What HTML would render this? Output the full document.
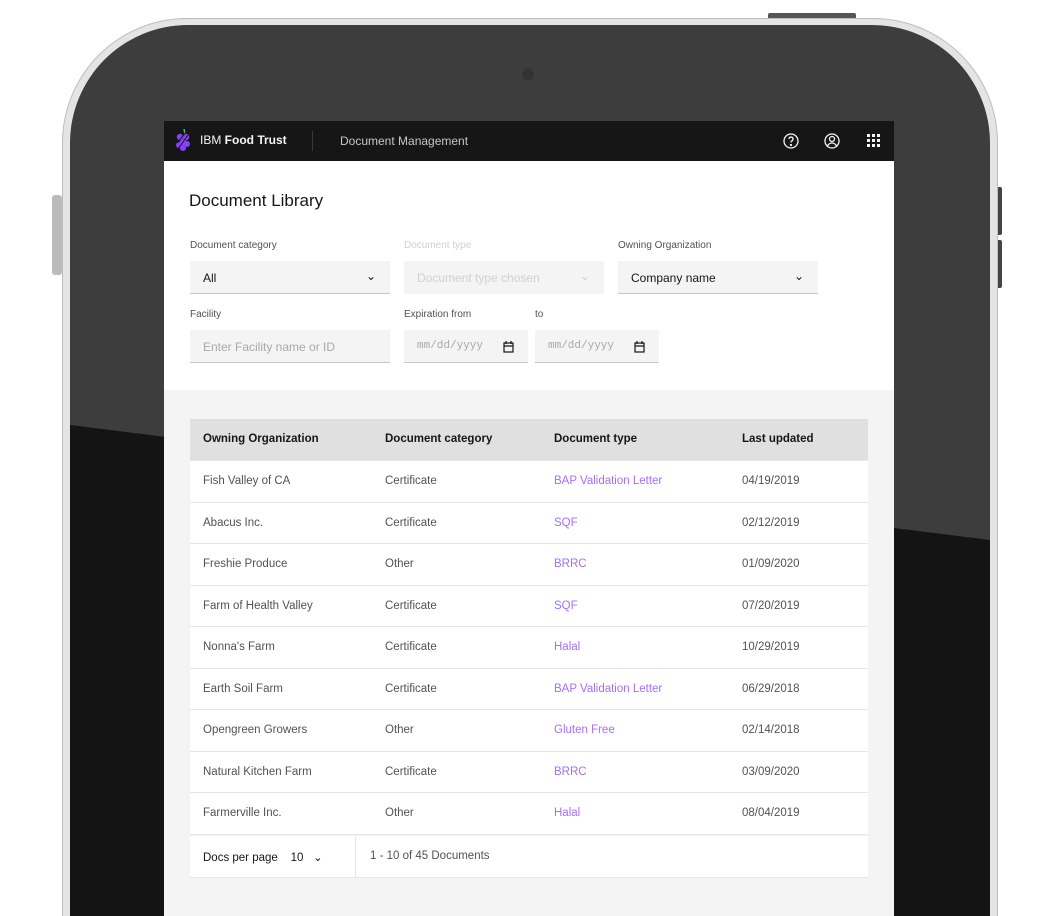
<!DOCTYPE html>
<html><head><meta charset="utf-8"><style>
*{margin:0;padding:0;box-sizing:border-box}
html{width:1052px;height:916px;overflow:hidden}
body{width:1052px;height:916px;overflow:hidden;background:#fff;font-family:"Liberation Sans",sans-serif;position:relative}
.abs{position:absolute}
.outer{left:62px;top:18px;width:936px;height:898px;border-radius:125px 125px 0 0;background:#e4e4e4;border:1px solid #bdbdbd;border-bottom:none}
.bez{left:70px;top:25px;width:920px;height:891px;border-radius:118px 118px 0 0;background:#3d3d3d;overflow:hidden}
.screen{left:164px;top:121px;width:730px;height:795px;background:#f4f4f4;overflow:hidden}
.hdr{left:0;top:0;width:730px;height:40px;background:#161616;color:#e0e0e0;font-size:12px}
.white{left:0;top:40px;width:730px;height:229px;background:#fff}
.lbl{font-size:10px;color:#525252}
.fld{background:#f4f4f4;border-bottom:1px solid #c6c6c6;height:33px;font-size:12px;color:#161616;padding:10px 13px}
.tbl{left:26px;top:298px;width:678px}
.row{height:41.5px;background:#fff;border-bottom:1px solid #e6e6e6;position:relative;font-size:11.5px;color:#525252}
.row span{position:absolute;top:14px}
.th{background:#e0e0e0;font-weight:bold;color:#161616;height:42px}
.c1{left:13px}.c2{left:195px}.c3{left:364px}.c4{left:552px}
.lk{color:#a56eff}
.cal{position:absolute;right:14px;top:11px}
</style></head><body>
<div class="abs" style="left:768px;top:13px;width:88px;height:6px;background:#555;border-radius:2px"></div>
<div class="abs" style="left:52px;top:195px;width:10px;height:80px;background:#bbb;border-radius:3px"></div>
<div class="abs" style="left:996px;top:187px;width:6px;height:48px;background:#444;border-radius:2px"></div>
<div class="abs" style="left:996px;top:240px;width:6px;height:48px;background:#444;border-radius:2px"></div>
<div class="abs outer"></div>
<div class="abs bez">
<svg class="abs" style="left:0;top:0" width="920" height="891"><polygon points="0,400 920,515 920,891 0,891" fill="#141414"/></svg>
<div class="abs" style="left:452px;top:43px;width:12px;height:12px;border-radius:50%;background:#333"></div>
</div>
<div class="abs screen">
<div class="abs hdr">
<svg class="abs" style="left:11px;top:8px" width="18" height="24" viewBox="0 0 18 24"><g fill="#8a3ffc"><circle cx="5" cy="8" r="3.2"/><circle cx="11" cy="8" r="3.2"/><circle cx="8" cy="13" r="3.2"/><circle cx="4" cy="16" r="3"/><circle cx="12" cy="15" r="3"/><circle cx="8" cy="19" r="3"/></g><path d="M9 0l1 5" stroke="#42be65" stroke-width="1.5"/><path d="M3 20L13 6M2 14L12 2" stroke="#161616" stroke-width="1"/></svg>
<div class="abs" style="left:36px;top:12px;color:#f4f4f4">IBM <b>Food Trust</b></div>
<div class="abs" style="left:148px;top:10px;width:1px;height:20px;background:#393939"></div>
<div class="abs" style="left:176px;top:13px;color:#c6c6c6">Document Management</div>
<svg class="abs" style="left:618px;top:11px" width="18" height="18" viewBox="0 0 18 18" fill="none" stroke="#f4f4f4" stroke-width="1.3"><circle cx="9" cy="9" r="7"/><path d="M7 7a2 2 0 1 1 2.5 2c-.5.2-.5.6-.5 1.5"/><circle cx="9" cy="13" r=".5" fill="#f4f4f4"/></svg>
<svg class="abs" style="left:659px;top:11px" width="18" height="18" viewBox="0 0 18 18" fill="none" stroke="#f4f4f4" stroke-width="1.3"><circle cx="9" cy="9" r="7"/><circle cx="9" cy="7" r="2.5"/><path d="M4.5 14c1-2 2.5-3 4.5-3s3.5 1 4.5 3"/></svg>
<svg class="abs" style="left:703px;top:13px" width="14" height="14" viewBox="0 0 14 14" fill="#f4f4f4"><rect x="0" y="0" width="3" height="3"/><rect x="5" y="0" width="3" height="3"/><rect x="10" y="0" width="3" height="3"/><rect x="0" y="5" width="3" height="3"/><rect x="5" y="5" width="3" height="3"/><rect x="10" y="5" width="3" height="3"/><rect x="0" y="10" width="3" height="3"/><rect x="5" y="10" width="3" height="3"/><rect x="10" y="10" width="3" height="3"/></svg>
</div>
<div class="abs white">
<div class="abs" style="left:25px;top:30px;font-size:17px;color:#161616">Document Library</div>
<div class="abs lbl" style="left:26px;top:79px">Document category</div>
<div class="abs lbl" style="left:240px;top:79px;color:#d0d0d0">Document type</div>
<div class="abs lbl" style="left:454px;top:79px">Owning Organization</div>
<div class="abs fld" style="left:26px;top:100px;width:200px">All<span style="position:absolute;right:14px;top:8px">&#8964;</span></div>
<div class="abs fld" style="left:240px;top:100px;width:200px;color:#d0d0d0;border-bottom-color:#f4f4f4">Document type chosen<span style="position:absolute;right:14px;top:8px">&#8964;</span></div>
<div class="abs fld" style="left:454px;top:100px;width:200px">Company name<span style="position:absolute;right:14px;top:8px">&#8964;</span></div>
<div class="abs lbl" style="left:26px;top:148px">Facility</div>
<div class="abs lbl" style="left:240px;top:148px">Expiration from</div>
<div class="abs lbl" style="left:371px;top:148px">to</div>
<div class="abs fld" style="left:26px;top:169px;width:200px;color:#a8a8a8">Enter Facility name or ID</div>
<div class="abs fld" style="left:240px;top:169px;width:124px;color:#a8a8a8;font-family:'Liberation Mono',monospace;font-size:11px">mm/dd/yyyy<svg class="cal" width="11" height="12" viewBox="0 0 11 12" fill="none" stroke="#161616" stroke-width="1.2"><rect x="1" y="2" width="9" height="9"/><path d="M1 5h9M3 0v3M8 0v3"/></svg></div>
<div class="abs fld" style="left:371px;top:169px;width:124px;color:#a8a8a8;font-family:'Liberation Mono',monospace;font-size:11px">mm/dd/yyyy<svg class="cal" width="11" height="12" viewBox="0 0 11 12" fill="none" stroke="#161616" stroke-width="1.2"><rect x="1" y="2" width="9" height="9"/><path d="M1 5h9M3 0v3M8 0v3"/></svg></div>
</div>
<div class="abs tbl">
<div class="row th"><span class="c1">Owning Organization</span><span class="c2">Document category</span><span class="c3">Document type</span><span class="c4">Last updated</span></div>
<div class="row"><span class="c1">Fish Valley of CA</span><span class="c2">Certificate</span><span class="c3 lk">BAP Validation Letter</span><span class="c4">04/19/2019</span></div>
<div class="row"><span class="c1">Abacus Inc.</span><span class="c2">Certificate</span><span class="c3 lk">SQF</span><span class="c4">02/12/2019</span></div>
<div class="row"><span class="c1">Freshie Produce</span><span class="c2">Other</span><span class="c3 lk">BRRC</span><span class="c4">01/09/2020</span></div>
<div class="row"><span class="c1">Farm of Health Valley</span><span class="c2">Certificate</span><span class="c3 lk">SQF</span><span class="c4">07/20/2019</span></div>
<div class="row"><span class="c1">Nonna's Farm</span><span class="c2">Certificate</span><span class="c3 lk">Halal</span><span class="c4">10/29/2019</span></div>
<div class="row"><span class="c1">Earth Soil Farm</span><span class="c2">Certificate</span><span class="c3 lk">BAP Validation Letter</span><span class="c4">06/29/2018</span></div>
<div class="row"><span class="c1">Opengreen Growers</span><span class="c2">Other</span><span class="c3 lk">Gluten Free</span><span class="c4">02/14/2018</span></div>
<div class="row"><span class="c1">Natural Kitchen Farm</span><span class="c2">Certificate</span><span class="c3 lk">BRRC</span><span class="c4">03/09/2020</span></div>
<div class="row"><span class="c1">Farmerville Inc.</span><span class="c2">Other</span><span class="c3 lk">Halal</span><span class="c4">08/04/2019</span></div>
<div class="row" style="height:42px;margin-top:1px;color:#161616"><span class="c1">Docs per page &nbsp;&nbsp; 10 &nbsp;&nbsp;&#8964;</span><span style="left:165px;top:0;width:1px;height:42px;background:#e6e6e6"></span><span style="left:180px;color:#525252">1 - 10 of 45 Documents</span></div>
</div>
</div>
</body></html>
